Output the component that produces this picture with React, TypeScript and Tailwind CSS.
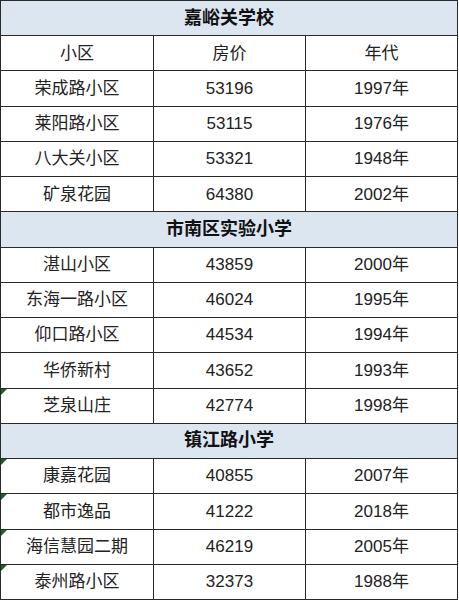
import React from 'react';

type Row = { name: string; price: string; year: string; mark?: boolean };
type Section = { school: string; rows: Row[] };

const sections: Section[] = [
  {
    school: '嘉峪关学校',
    rows: [
      { name: '小区', price: '房价', year: '年代' },
      { name: '荣成路小区', price: '53196', year: '1997年' },
      { name: '莱阳路小区', price: '53115', year: '1976年' },
      { name: '八大关小区', price: '53321', year: '1948年' },
      { name: '矿泉花园', price: '64380', year: '2002年' },
    ],
  },
  {
    school: '市南区实验小学',
    rows: [
      { name: '湛山小区', price: '43859', year: '2000年' },
      { name: '东海一路小区', price: '46024', year: '1995年' },
      { name: '仰口路小区', price: '44534', year: '1994年' },
      { name: '华侨新村', price: '43652', year: '1993年' },
      { name: '芝泉山庄', price: '42774', year: '1998年', mark: true },
    ],
  },
  {
    school: '镇江路小学',
    rows: [
      { name: '康嘉花园', price: '40855', year: '2007年', mark: true },
      { name: '都市逸品', price: '41222', year: '2018年', mark: true },
      { name: '海信慧园二期', price: '46219', year: '2005年', mark: true },
      { name: '泰州路小区', price: '32373', year: '1988年', mark: true },
    ],
  },
];

const font = { fontFamily: '"Liberation Sans", "Noto Sans CJK SC", sans-serif' };

export default function App() {
  const all: React.ReactNode[] = [];
  sections.forEach((s, si) => {
    all.push(
      <div
        key={'h' + si}
        className="flex-1 flex items-center justify-center bg-[#dce6f1] border-t border-[#2a2a2a] first:border-t-0 text-[18px] font-bold text-[#111]"
      >
        {s.school}
      </div>
    );
    s.rows.forEach((r, ri) => {
      all.push(
        <div key={si + '-' + ri} className="relative flex-1 grid grid-cols-3 border-t border-[#2a2a2a] bg-white text-[17px] text-[#222]">
          {r.mark && (
            <span className="absolute left-0 top-0 w-0 h-0 border-t-[6px] border-r-[6px] border-t-[#1f5c2e] border-r-transparent" />
          )}
          <div className="flex items-center justify-center">{r.name}</div>
          <div className="flex items-center justify-center border-l border-[#2a2a2a]">{r.price}</div>
          <div className="flex items-center justify-center border-l border-[#2a2a2a]">{r.year}</div>
        </div>
      );
    });
  });

  return (
    <div className="w-[459px] h-[600px] bg-white" style={font}>
      <div className="w-[458px] h-[600px] flex flex-col border border-[#2a2a2a]">{all}</div>
    </div>
  );
}
